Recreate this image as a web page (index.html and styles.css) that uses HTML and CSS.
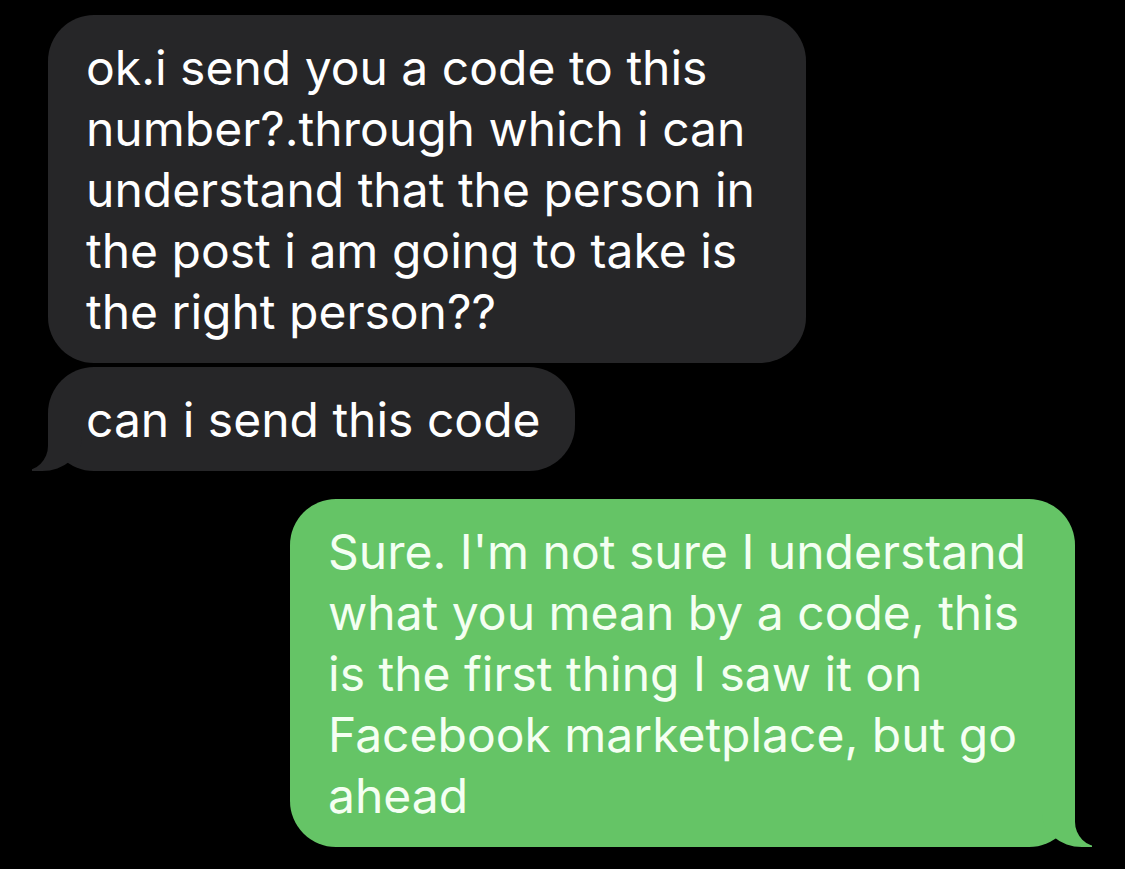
FILE: index.html
```html
<!DOCTYPE html>
<html lang="en">
<head>
    <meta charset="UTF-8">
    <title>Messages</title>
    <link rel="stylesheet" href="styles.css">
</head>
<body>
    <div class="chat">
        <p class="bubble them first">ok.i send you a code to this<br>number?.through which i can<br>understand that the person in<br>the post i am going to take is<br>the right person??</p>
        <p class="bubble them second tail">can i send this code</p>
        <p class="bubble me tail">Sure. I'm not sure I understand<br>what you mean by a code, this<br>is the first thing I saw it on<br>Facebook marketplace, but go<br>ahead</p>
    </div>
</body>
</html>
```

FILE: styles.css
```css
* {
    margin: 0;
    padding: 0;
    box-sizing: border-box;
}

body {
    background-color: #000;
    font-family: 'Inter', 'Roboto', sans-serif;
}

.chat {
    display: flex;
    flex-direction: column;
    padding: 15px 0 0 48px;
    width: 1125px;
    height: 869px;
    overflow: hidden;
}

.bubble {
    position: relative;
    font-size: 48px;
    line-height: 61px;
    white-space: nowrap;
    color: #fff;
    padding: 22px 38px 21px;
    border-radius: 46px;
}

.them {
    background-color: #262628;
}

.first {
    width: 758px;
}

.second {
    width: 527px;
    margin-top: 4px;
}

.me {
    background-color: #65c466;
    color: #f4fff2;
    width: 785px;
    margin-top: 28px;
    margin-left: 242px;
}

/* tails */
.tail::before,
.tail::after {
    content: "";
    position: absolute;
    bottom: 0;
    height: 50px;
}

.them.tail::before {
    left: -16px;
    width: 50px;
    background-color: #262628;
    border-bottom-right-radius: 40px 34px;
}

.them.tail::after {
    left: -65px;
    width: 65px;
    background-color: #000;
    border-bottom-right-radius: 25px;
}

.me.tail::before {
    right: -17px;
    width: 50px;
    background-color: #65c466;
    border-bottom-left-radius: 40px 34px;
}

.me.tail::after {
    right: -65px;
    width: 65px;
    background-color: #000;
    border-bottom-left-radius: 25px;
}
```
